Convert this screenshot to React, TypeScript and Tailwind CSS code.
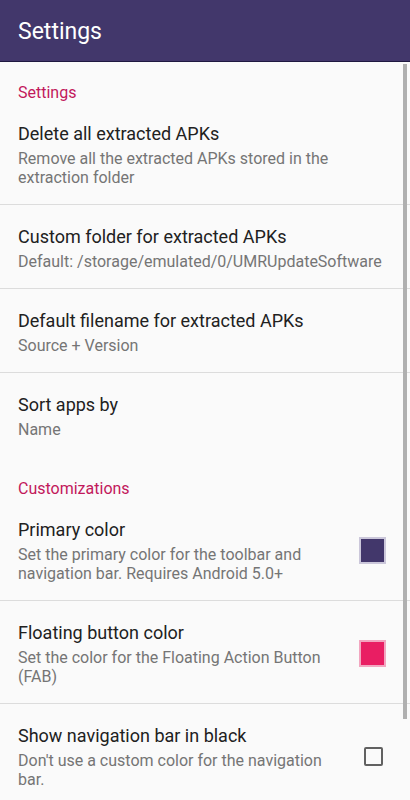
import React from "react";

type Item = {
  title: string;
  summary: string;
  swatch?: string;
  swatchBorder?: string;
  checkbox?: boolean;
  divider?: boolean;
};

const general: Item[] = [
  {
    title: "Delete all extracted APKs",
    summary: "Remove all the extracted APKs stored in the extraction folder",
    divider: true,
  },
  {
    title: "Custom folder for extracted APKs",
    summary: "Default: /storage/emulated/0/UMRUpdateSoftware",
    divider: true,
  },
  {
    title: "Default filename for extracted APKs",
    summary: "Source + Version",
    divider: true,
  },
  { title: "Sort apps by", summary: "Name" },
];

const custom: Item[] = [
  {
    title: "Primary color",
    summary: "Set the primary color for the toolbar and navigation bar. Requires Android 5.0+",
    swatch: "bg-[#42376b]",
    swatchBorder: "border-[#cbc7da]",
    divider: true,
  },
  {
    title: "Floating button color",
    summary: "Set the color for the Floating Action Button (FAB)",
    swatch: "bg-[#e91e63]",
    swatchBorder: "border-[#f2a6c0]",
    divider: true,
  },
  {
    title: "Show navigation bar in black",
    summary: "Don't use a custom color for the navigation bar.",
    checkbox: true,
  },
];

function Category({ label, className }: { label: string; className: string }) {
  return (
    <div className={`pl-[18px] text-[16px] leading-[19px] text-[#c2185b] ${className}`}>{label}</div>
  );
}

function Row({ item }: { item: Item }) {
  const hasWidget = !!item.swatch || !!item.checkbox;
  return (
    <div className={item.divider ? "border-b border-[#dcdcdc]" : ""}>
      <div className="flex items-center pl-[18px] pr-[24px] pt-[20px] pb-[17px]">
        <div className={hasWidget ? "flex-1 min-w-0 pr-[26px]" : "flex-1 min-w-0 -mr-[8px]"}>
          <div className="text-[18px] leading-6 text-[#212121]">{item.title}</div>
          <div className="mt-[3px] text-[16px] leading-[19px] text-[#757575]">{item.summary}</div>
        </div>
        {item.swatch && (
          <div className={`w-[27px] h-[27px] border-2 ${item.swatchBorder} ${item.swatch} shrink-0`} />
        )}
        {item.checkbox && (
          <div className="mr-[3px] w-[19px] h-[19px] border-2 border-[#616161] rounded-[2px] shrink-0" />
        )}
      </div>
    </div>
  );
}

export default function App() {
  return (
    <div
      className="w-[410px] h-[800px] overflow-hidden bg-[#fafafa] relative"
      style={{ fontFamily: "Roboto, 'Noto Sans', sans-serif" }}
    >
      {/* toolbar */}
      <div className="h-[62px] bg-[#42376b] border-b border-[#1f1840] flex items-center pl-[18px]">
        <span className="text-[23px] text-white leading-none pt-[2px]">Settings</span>
      </div>

      <Category label="Settings" className="pt-[21px]" />
      {general.map((it) => (
        <Row key={it.title} item={it} />
      ))}

      <Category label="Customizations" className="pt-[23px]" />
      {custom.map((it) => (
        <Row key={it.title} item={it} />
      ))}

      {/* scrollbar */}
      <div className="absolute right-[3px] top-[64px] w-[4px] h-[655px] bg-[#b0b0b0]" />
    </div>
  );
}
